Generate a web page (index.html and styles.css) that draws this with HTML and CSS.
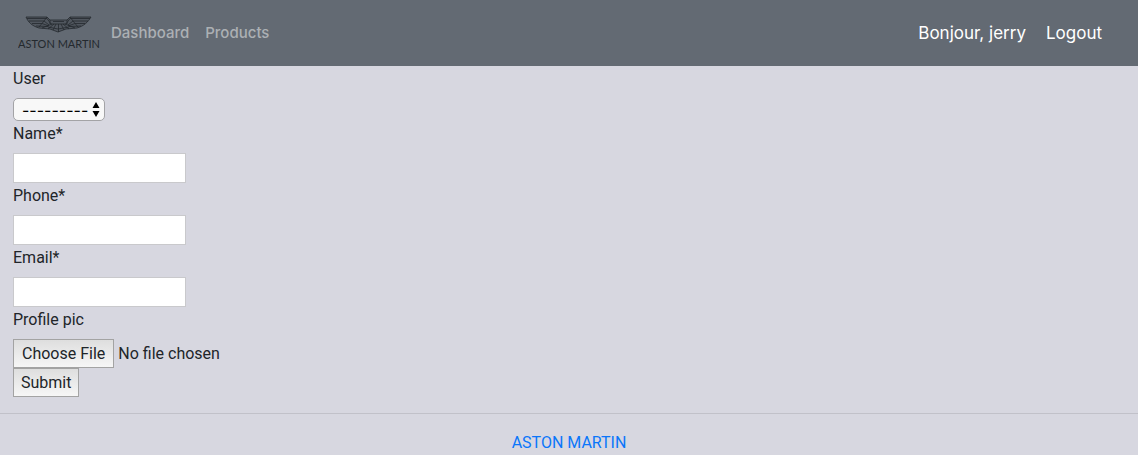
FILE: index.html
```html
<!DOCTYPE html>
<html lang="en">
<head>
<meta charset="utf-8">
<meta name="viewport" content="width=device-width, initial-scale=1">
<title>Account settings</title>
<link rel="stylesheet" href="styles.css">
</head>
<body>
<nav class="navbar">
  <a class="brand" href="#" aria-label="Aston Martin">
    <svg class="logo" width="82" height="38" viewBox="0 0 82 38">
      <g fill="none" stroke="#24292e" stroke-width="0.8">
        <path d="M8 3H29L32 6H49L52 3H73C70 8 66 12 59 14L48 15L40 18L32 15L21 14C14 12 10 8 8 3Z" fill="#24292e" fill-opacity="0.3"/>
        <path d="M9 4.500H29L33 10H48L52 4.500H72M11 7H26L31 11M70 7H55L50 11M14 9.500H24L31 12M67 9.500H57L50 12M18 12L30 12.500M63 12L51 12.500M29 3L26 7L21 13M52 3L55 7L60 13M32 6V10M49 6V10M35 7.500H46"/>
        <path d="M34 10L24 14M36 10L30 15M38 10L35 16M40.500 10V18M43 10L46 16M45 10L51 15M47 10L57 14M30 13L40 15L51 13"/>
      </g>
      <text class="logo-text" x="41" y="34" text-anchor="middle">ASTON MARTIN</text>
    </svg>
  </a>
  <a class="nav-link" href="#">Dashboard</a>
  <a class="nav-link" href="#">Products</a>
  <div class="session">
    <span>Bonjour, jerry</span>
    <a class="logout" href="#">Logout</a>
  </div>
</nav>
<main>
  <form class="form">
    <label for="user">User</label>
    <div class="select-wrap">
      <select class="select" id="user"><option>---------</option></select>
      <svg class="arrows" width="8" height="16" viewBox="0 0 8 16"><path d="M4 0L7.500 6H.5ZM4 15L.5 9H7.500Z"/></svg>
    </div>
    <label for="name">Name*</label>
    <input class="field" id="name" type="text">
    <label for="phone">Phone*</label>
    <input class="field" id="phone" type="text">
    <label for="email">Email*</label>
    <input class="field" id="email" type="text">
    <label for="pic">Profile pic</label>
    <input class="file" id="pic" type="file">
    <button class="submit" type="submit">Submit</button>
  </form>
</main>
<footer class="footer"><a href="#">ASTON MARTIN</a></footer>
</body>
</html>
```
FILE: styles.css
```css
* { box-sizing: border-box; }
body {
  margin: 0;
  background: #d7d7e0;
  color: #212529;
  font: 16px/24px Roboto, "Liberation Sans", sans-serif;
}
a { text-decoration: none; }
.navbar {
  display: flex;
  align-items: center;
  padding: 8px 36px 8px 18px;
  min-height: 66px;
  background: #636a73;
  color: #fff;
  font-family: Inter, "Liberation Sans", sans-serif;
}
.brand { display: flex; margin-right: 3px; }
.logo-text { font: 11px Lato, sans-serif; fill: #24292e; }
.nav-link { padding: 0 8px; color: #acb0b4; font-size: 15px; font-weight: 500; }
.session {
  display: flex;
  gap: 20px;
  margin-left: auto;
  font-size: 17px;
}
.logout { color: #fff; }
.form {
  display: flex;
  flex-direction: column;
  align-items: flex-start;
  padding: 0 13px;
}
.form label { padding: 1px 0 7px; }
.select-wrap { position: relative; display: flex; }
.select {
  appearance: none;
  width: 92px;
  height: 23px;
  padding: 0 8px;
  border: 1px solid #a3a3a6;
  border-radius: 5px;
  background: #f8f8f8;
  color: #000;
  font: 16px/20px Inter, sans-serif;
}
.arrows { position: absolute; right: 5px; top: 4px; pointer-events: none; }
.field {
  width: 173px;
  height: 30px;
  padding: 2px 6px;
  border: 1px solid #c9c9cc;
  background: #fff;
  font: inherit;
}
.file { font: inherit; color: inherit; height: 29px; }
.file::file-selector-button, .submit {
  height: 29px;
  margin: 0;
  padding: 0 7px;
  border: 1px solid #a3a3a3;
  border-radius: 0;
  background: linear-gradient(#dedede, #f6f6f6);
  color: #212529;
  font: inherit;
}
.file::file-selector-button { margin-right: 4px; padding: 0 8px; }
.footer {
  margin-top: 16px;
  padding-top: 17px;
  border-top: 1px solid #c1c1c9;
  text-align: center;
}
.footer a { color: #0a76fa; }
```
